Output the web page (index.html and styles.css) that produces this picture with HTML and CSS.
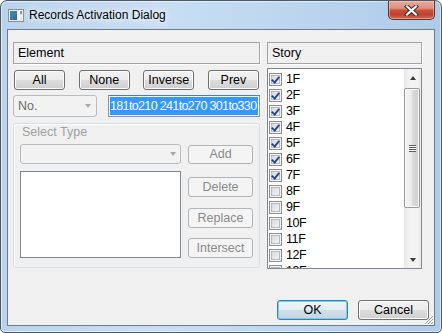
FILE: index.html
```html
<!DOCTYPE html>
<html>
<head>
<meta charset="utf-8">
<title>Records Activation Dialog</title>
<link rel="stylesheet" href="styles.css">
</head>
<body>
<div class="win">
  <div class="titlebar">
    <span class="appicon">
      <svg width="16" height="13" viewBox="0 0 16 13">
        <defs>
          <linearGradient id="ig" x1="0" y1="0" x2="1" y2="1">
            <stop offset="0" stop-color="#2f8f86"/>
            <stop offset="0.5" stop-color="#3d7fb0"/>
            <stop offset="1" stop-color="#2a5f8e"/>
          </linearGradient>
        </defs>
        <rect x="0.5" y="0.5" width="15" height="12" fill="#e8ecef" stroke="#8a9096"/>
        <rect x="2" y="2" width="7" height="9" fill="url(#ig)"/>
        <rect x="10" y="2" width="2" height="9" fill="#ffffff"/>
        <rect x="12" y="2" width="2" height="3" fill="#8d98a3"/>
      </svg>
    </span>
    <span class="title">Records Activation Dialog</span>
    <span class="close">
      <svg width="15" height="11" viewBox="0 0 15 11">
        <path d="M3 1.5 L12 9.5 M12 1.5 L3 9.5" stroke="#4a2a26" stroke-width="4.2" stroke-linecap="square"/>
        <path d="M3 1.5 L12 9.5 M12 1.5 L3 9.5" stroke="#ffffff" stroke-width="2.2" stroke-linecap="square"/>
      </svg>
    </span>
  </div>
  <div class="client">
    <div class="main">
      <div class="left">
        <div class="hdr">Element</div>
        <div class="btnrow">
          <button class="btn">All</button>
          <button class="btn">None</button>
          <button class="btn">Inverse</button>
          <button class="btn">Prev</button>
        </div>
        <div class="filter">
          <div class="combo small"><span class="ctext">No.</span><i class="arr"></i></div>
          <div class="edit"><span class="sel">181to210 241to270 301to330</span></div>
        </div>
        <div class="group">
          <div class="glabel">Select Type</div>
          <div class="gbody">
            <div class="gleft">
              <div class="combo wide"><span class="ctext"></span><i class="arr"></i></div>
              <div class="lbox"></div>
            </div>
            <div class="gright">
              <button class="btn dis b-add">Add</button>
              <button class="btn dis b-del">Delete</button>
              <button class="btn dis b-rep">Replace</button>
              <button class="btn dis b-int">Intersect</button>
            </div>
          </div>
        </div>
      </div>
      <div class="right">
        <div class="hdr">Story</div>
        <div class="slist">
          <div class="rows">
            <div class="row"><span class="cb on"></span><span class="lab">1F</span></div>
            <div class="row"><span class="cb on"></span><span class="lab">2F</span></div>
            <div class="row"><span class="cb on"></span><span class="lab">3F</span></div>
            <div class="row"><span class="cb on"></span><span class="lab">4F</span></div>
            <div class="row"><span class="cb on"></span><span class="lab">5F</span></div>
            <div class="row"><span class="cb on"></span><span class="lab">6F</span></div>
            <div class="row"><span class="cb on"></span><span class="lab">7F</span></div>
            <div class="row"><span class="cb"></span><span class="lab">8F</span></div>
            <div class="row"><span class="cb"></span><span class="lab">9F</span></div>
            <div class="row"><span class="cb"></span><span class="lab">10F</span></div>
            <div class="row"><span class="cb"></span><span class="lab">11F</span></div>
            <div class="row"><span class="cb"></span><span class="lab">12F</span></div>
            <div class="row"><span class="cb"></span><span class="lab">13F</span></div>
          </div>
          <div class="sbar">
            <div class="sbtn"><i class="up"></i></div>
            <div class="thumb"><span class="gripl"></span></div>
            <div class="strack"></div>
            <div class="sbtn"><i class="down"></i></div>
          </div>
        </div>
      </div>
    </div>
    <div class="footer">
      <button class="btn wide71 def">OK</button>
      <button class="btn wide71">Cancel</button>
    </div>
    <span class="grip">
      <svg width="11" height="11" viewBox="0 0 11 11">
        <path d="M10 2 L2 10 M10 5 L5 10 M10 8 L8 10" stroke="#9aa0a6" stroke-width="1"/>
        <path d="M11 3 L3 11 M11 6 L6 11 M11 9 L9 11" stroke="#ffffff" stroke-width="1"/>
      </svg>
    </span>
  </div>
</div>
</body>
</html>
```
FILE: styles.css
```css
html, body {
  margin: 0;
  padding: 0;
  background: #ffffff;
}
body {
  font-family: "Liberation Sans", Arial, sans-serif;
  font-size: 12.5px;
  color: #000;
}
.win {
  width: 442px;
  height: 333px;
  box-sizing: border-box;
  border: 1px solid #4b5866;
  border-radius: 7px 7px 5px 5px;
  background: linear-gradient(to right, #bad3ec 0%, #c9def3 35%, #bdd6ef 65%, #aecbe9 100%);
  box-shadow: inset 0 0 0 1px rgba(255,255,255,0.55);
  padding: 0 6px 6px 6px;
  display: flex;
  flex-direction: column;
  overflow: hidden;
}
.titlebar {
  height: 28px;
  display: flex;
  align-items: center;
  flex: none;
}
.appicon {
  display: flex;
  width: 16px;
  height: 13px;
  margin-left: 1px;
  margin-right: 5px;
}
.title {
  font-family: "Liberation Sans", Arial, sans-serif;
  font-size: 12px;
  color: #000;
  text-shadow: 0 0 6px #ffffff, 0 0 10px #ffffff;
}
.close {
  margin-left: auto;
  align-self: flex-start;
  margin-top: -1px;
  width: 47px;
  height: 20px;
  box-sizing: border-box;
  border: 1px solid #6e2b25;
  border-top-color: #8a3a33;
  border-radius: 0 0 5px 5px;
  background: linear-gradient(#e9ab9c 0%, #dd8f7e 40%, #c8503d 52%, #c0402f 75%, #d36a52 100%);
  box-shadow: inset 0 0 0 1px rgba(255,220,210,0.45);
  display: flex;
  align-items: center;
  justify-content: center;
}
.client {
  flex: 1;
  border: 1px solid #6f7b88;
  background: #f0f0f0;
  padding: 12px 5px 5px 5px;
  display: flex;
  flex-direction: column;
  position: relative;
}
.main {
  display: flex;
  gap: 7px;
  height: 227px;
}
.left {
  width: 247px;
  display: flex;
  flex-direction: column;
}
.right {
  width: 155px;
  display: flex;
  flex-direction: column;
}
.hdr {
  height: 22px;
  box-sizing: border-box;
  border: 1px solid #a5a5a5;
  box-shadow: 1px 1px 0 #ffffff;
  padding-left: 4px;
  line-height: 20px;
}
.btnrow {
  margin-top: 6px;
  display: flex;
  justify-content: space-between;
  padding: 0 1px;
}
.btn {
  height: 20px;
  width: 51px;
  box-sizing: border-box;
  border: 1px solid #707070;
  border-radius: 3px;
  background: linear-gradient(#f2f2f2 0%, #ebebeb 49%, #dddddd 50%, #cfcfcf 100%);
  box-shadow: inset 0 0 0 1px #fbfbfb;
  font-family: "Liberation Sans", Arial, sans-serif;
  font-size: 12.5px;
  color: #000;
  padding: 0;
  line-height: 18px;
  margin: 0;
}
.btn.dis {
  width: 65px;
  border-color: #b1b5b8;
  background: #f4f4f4;
  box-shadow: none;
  color: #8a8a8a;
}
.filter {
  margin-top: 5px;
  display: flex;
  justify-content: space-between;
  height: 22px;
}
.combo {
  box-sizing: border-box;
  border: 1px solid #b8bcc0;
  border-radius: 3px;
  background: #f2f2f2;
  display: flex;
  align-items: center;
  color: #6d6d6d;
}
.combo.small {
  width: 84px;
  height: 22px;
}
.combo.wide {
  width: 161px;
  height: 20px;
}
.ctext {
  flex: 1;
  padding-left: 4px;
}
.arr {
  width: 0;
  height: 0;
  border-left: 3.5px solid transparent;
  border-right: 3.5px solid transparent;
  border-top: 4px solid #a9a9a9;
  margin-right: 5px;
}
.combo.wide .arr {
  margin-right: 4px;
}
.edit {
  width: 152px;
  height: 22px;
  box-sizing: border-box;
  border: 1px solid #7b9ab8;
  border-top-color: #5a7a9c;
  background: #ffffff;
  padding: 1px 1px 0 1px;
  overflow: hidden;
  white-space: nowrap;
}
.sel {
  display: inline-block;
  background: #3399ff;
  color: #ffffff;
  line-height: 18px;
  font-size: 12.5px;
  letter-spacing: -0.65px;
  padding-right: 2px;
}
.group {
  margin-top: 6px;
  height: 145px;
  box-sizing: border-box;
  border: 1px solid #d5dfe5;
  border-radius: 3px;
  box-shadow: inset 1px 1px 0 #ffffff;
  padding: 1px 0 0 6px;
}
.glabel {
  height: 14px;
  line-height: 14px;
  padding-left: 2px;
  color: #a0a0a0;
}
.gbody {
  margin-top: 5px;
  display: flex;
  gap: 7px;
}
.gleft {
  width: 161px;
  display: flex;
  flex-direction: column;
}
.lbox {
  margin-top: 7px;
  height: 87px;
  box-sizing: border-box;
  border: 1px solid #828790;
  background: #ffffff;
}
.gright {
  width: 65px;
  display: flex;
  flex-direction: column;
}
.b-add { margin-top: 1px; height: 19px; line-height: 17px; }
.b-del { margin-top: 13px; }
.b-rep { margin-top: 11px; }
.b-int { margin-top: 10px; }
.slist {
  margin-top: 4px;
  height: 201px;
  box-sizing: border-box;
  border: 1px solid #828790;
  background: #ffffff;
  display: flex;
}
.rows {
  flex: 1;
  padding-top: 2px;
  overflow: hidden;
}
.row {
  height: 16px;
  display: flex;
  align-items: center;
  padding-left: 1px;
}
.cb {
  width: 13px;
  height: 13px;
  box-sizing: border-box;
  border: 1px solid #8f8f8f;
  background: linear-gradient(135deg, #cfd2d6 0%, #e9eaec 60%, #f6f6f6 100%);
  box-shadow: inset 0 0 0 1px #f4f4f4, inset 0 0 0 2px #b8bcc1;
  position: relative;
  flex: none;
}
.cb.on::after {
  content: "";
  position: absolute;
  left: 3px;
  top: 1px;
  width: 3px;
  height: 6px;
  border-right: 2px solid #2c4a8f;
  border-bottom: 2px solid #2c4a8f;
  transform: rotate(40deg);
}
.lab {
  margin-left: 4px;
  font-size: 12.5px;
  letter-spacing: -0.4px;
  line-height: 16px;
}
.sbar {
  width: 17px;
  display: flex;
  flex-direction: column;
  background: linear-gradient(to right, #e6e6e6 0%, #f3f3f3 30%, #f3f3f3 80%, #e9e9e9 100%);
}
.sbtn {
  height: 17px;
  display: flex;
  align-items: center;
  justify-content: center;
  flex: none;
}
.up {
  width: 0;
  height: 0;
  border-left: 3.5px solid transparent;
  border-right: 3.5px solid transparent;
  border-bottom: 4px solid #3b3b3b;
}
.down {
  width: 0;
  height: 0;
  border-left: 3.5px solid transparent;
  border-right: 3.5px solid transparent;
  border-top: 4px solid #3b3b3b;
}
.thumb {
  margin: 2px 1px 0 0;
  height: 120px;
  box-sizing: border-box;
  border: 1px solid #9a9a9a;
  border-radius: 2px;
  background: linear-gradient(to right, #f4f4f4 0%, #ececec 45%, #dadada 55%, #cfcfcf 100%);
  box-shadow: inset 0 0 0 1px #fafafa;
  display: flex;
  align-items: center;
  justify-content: center;
  flex: none;
}
.gripl {
  width: 7px;
  height: 7px;
  background: repeating-linear-gradient(#5e5e5e 0 1px, #f8f8f8 1px 2px);
}
.strack {
  flex: 1;
}
.footer {
  margin-top: auto;
  display: flex;
  justify-content: flex-end;
  gap: 10px;
}
.btn.wide71 {
  width: 71px;
}
.btn.def {
  border-color: #3c7fb1;
  box-shadow: inset 0 0 0 1px #6fd0f5;
  background: linear-gradient(#eef5fa 0%, #e3edf4 49%, #d1dfe9 50%, #c4d5e2 100%);
}
.grip {
  position: absolute;
  right: 0;
  bottom: 0;
  width: 11px;
  height: 11px;
  display: flex;
}
```
